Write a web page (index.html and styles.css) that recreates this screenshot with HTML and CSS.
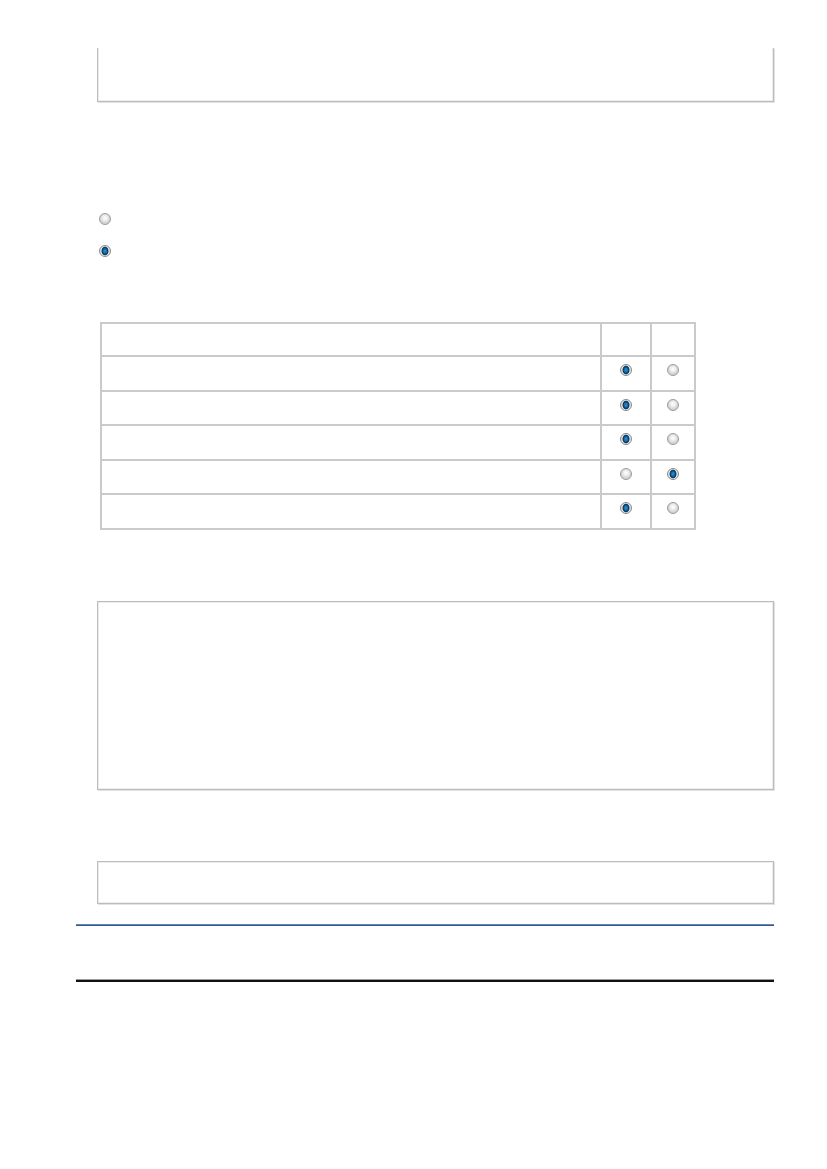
FILE: index.html
```html
<!DOCTYPE html>
<html lang="en">
<head>
    <meta charset="UTF-8">
    <meta name="viewport" content="width=device-width, initial-scale=1.0">
    <title>Form</title>
    <link rel="stylesheet" href="styles.css">
</head>
<body>
    <div class="page">
        <div class="field continued"></div>

        <div class="choices">
            <label class="choice"><input type="radio" class="radio" name="option"></label>
            <label class="choice"><input type="radio" class="radio" name="option" checked></label>
        </div>

        <table class="matrix">
            <tr class="head">
                <td class="question"></td>
                <td class="answer"></td>
                <td class="answer last"></td>
            </tr>
            <tr>
                <td class="question"></td>
                <td class="answer"><input type="radio" class="radio" name="q1" checked></td>
                <td class="answer last"><input type="radio" class="radio" name="q1"></td>
            </tr>
            <tr>
                <td class="question"></td>
                <td class="answer"><input type="radio" class="radio" name="q2" checked></td>
                <td class="answer last"><input type="radio" class="radio" name="q2"></td>
            </tr>
            <tr>
                <td class="question"></td>
                <td class="answer"><input type="radio" class="radio" name="q3" checked></td>
                <td class="answer last"><input type="radio" class="radio" name="q3"></td>
            </tr>
            <tr>
                <td class="question"></td>
                <td class="answer"><input type="radio" class="radio" name="q4"></td>
                <td class="answer last"><input type="radio" class="radio" name="q4" checked></td>
            </tr>
            <tr>
                <td class="question"></td>
                <td class="answer"><input type="radio" class="radio" name="q5" checked></td>
                <td class="answer last"><input type="radio" class="radio" name="q5"></td>
            </tr>
        </table>

        <div class="field comments"></div>

        <div class="field single"></div>

        <div class="rule-blue"></div>
        <div class="rule-black"></div>
    </div>
</body>
</html>
```

FILE: styles.css
```css
body {
    font-family: "Liberation Sans", Arial, sans-serif;
    background-color: #fff;
    margin: 0;
    color: #333;
}
.page {
    width: 698px;
    padding: 48px 0 0 76px;
}
.field {
    margin-left: 21px;
    border: 1px solid #bdbdbd;
    box-shadow: inset 0 0 0 1px #ececec, 1px 1px 0 #e2e2e2;
    box-sizing: border-box;
}
/* field carried over from the previous page: no top edge */
.continued {
    height: 54px;
    border-top: none;
    box-shadow: inset 1px 0 0 #ececec, inset -1px -1px 0 #ececec, 1px 1px 0 #e2e2e2;
}
.choices {
    margin: 111px 0 0 23px;
    display: flex;
    flex-direction: column;
    gap: 20px;
}
.choice {
    display: flex;
    height: 12px;
}
.radio {
    appearance: none;
    -webkit-appearance: none;
    width: 12px;
    height: 12px;
    margin: 0;
    border-radius: 50%;
    border: 1px solid #9c9c9c;
    box-sizing: border-box;
    background: radial-gradient(circle at 50% 40%, #ffffff 0, #f2f2f2 2px, #d2d2d2 5px);
}
.radio:checked {
    border-color: #8a8a8a;
    background: radial-gradient(ellipse 2.6px 3.2px at 50% 50%, #2c95d6 0, #116aa8 70%, #0d3d66 100%, #0d3d66 120%, #f0f0f0 150%, #d6d6d6 200%);
}
.matrix {
    margin: 65px 0 0 24px;
    width: 596px;
    border-collapse: collapse;
}
.matrix td {
    border: 2px solid #cacaca;
    height: 34.6px;
    padding: 0;
    box-sizing: border-box;
}
.matrix .head td {
    height: 33px;
}
.matrix .question {
    width: 502px;
}
.matrix .answer {
    width: 50px;
    padding-top: 7px;
    vertical-align: top;
}
.matrix .answer.last {
    width: 44px;
}
.matrix .radio {
    display: block;
    margin: 0 auto;
}
.comments {
    margin-top: 71px;
    height: 189px;
}
.single {
    margin-top: 71px;
    height: 43px;
}
.rule-blue {
    margin-top: 20px;
    height: 2px;
    background: linear-gradient(#7d9cc6, #1c437f);
}
.rule-black {
    margin-top: 53px;
    height: 3px;
    background: linear-gradient(#9a9a9a 0 1px, #111 1px);
}
```
